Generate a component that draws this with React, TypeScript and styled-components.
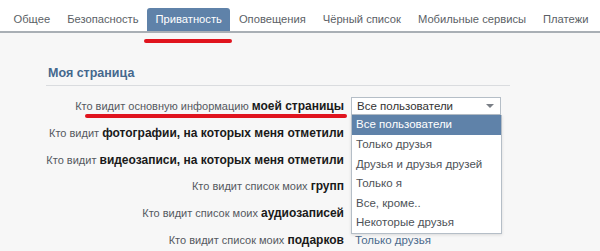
import { Fragment } from "react";
import styled, { createGlobalStyle } from "styled-components";

const GlobalStyle = createGlobalStyle`
  body {
    margin: 0;
    font-family: "Liberation Sans", Arial, sans-serif;
    font-size: 11px;
    background: #f7f7f7;
  }
`;

const Page = styled.div`
  position: relative;
  width: 600px;
  height: 251px;
  overflow: hidden;
  background: #f7f7f7;
`;

const TabBar = styled.nav`
  display: flex;
  align-items: flex-end;
  height: 31px;
  padding-left: 5px;
  background: #fff;
  border-bottom: 2px solid #a9afb5;
`;

const Tab = styled.div<{ $active?: boolean }>`
  height: 23px;
  line-height: 23px;
  padding: 0 8.5px;
  font-size: 11.2px;
  white-space: nowrap;
  color: ${(p) => (p.$active ? "#fff" : "#5b5f66")};
  background: ${(p) => (p.$active ? "#5f82a9" : "transparent")};
  border-radius: 3px 3px 0 0;
`;

// red marker drawn over the screenshot
const Mark = styled.div<{ $left: number; $top: number; $width: number }>`
  position: absolute;
  left: ${(p) => p.$left}px;
  top: ${(p) => p.$top}px;
  width: ${(p) => p.$width}px;
  height: 4px;
  border-radius: 2px;
  background: #e0141e;
`;

const Content = styled.div`
  padding: 0 90px 0 46px;
`;

const SectionTitle = styled.h2`
  margin: 33px 0 0;
  padding: 0 0 5px 2px;
  font-size: 12.5px;
  font-weight: bold;
  color: #45688e;
  border-bottom: 1px solid #dadcdf;
`;

const Rows = styled.div`
  display: grid;
  grid-template-columns: 298px 1fr;
  column-gap: 7px;
  grid-auto-rows: 26.7px;
  margin-top: 7px;
  align-items: center;
`;

const Label = styled.div`
  text-align: right;
  white-space: nowrap;
  color: #55595f;
  font-size: 11px;
  b {
    color: #1a1a1a;
    font-size: 12px;
  }
`;

const Value = styled.div`
  padding-left: 4px;
  color: #4a6a8c;
  font-size: 11.5px;
`;

const Select = styled.div`
  position: relative;
  width: 143px;
  height: 16px;
  line-height: 16px;
  padding-left: 5px;
  border: 1px solid #b5bec7;
  background: #fff;
  color: #333;
  font-size: 11.5px;
`;

const Arrow = styled.span`
  position: absolute;
  right: 6px;
  top: 6px;
  border-left: 4px solid transparent;
  border-right: 4px solid transparent;
  border-top: 4px solid #7a7f86;
`;

const Menu = styled.ul`
  position: absolute;
  left: -1px;
  top: 17px;
  z-index: 2;
  width: 149px;
  margin: 0;
  padding: 0;
  list-style: none;
  background: #fff;
  border: 1px solid #b5bec7;
  border-top: none;
  box-shadow: 0 1px 3px rgba(0, 0, 0, 0.12);
`;

const Option = styled.li<{ $selected?: boolean }>`
  height: 19.6px;
  line-height: 19.6px;
  padding-left: 4px;
  font-size: 11.5px;
  color: ${(p) => (p.$selected ? "#fff" : "#4d5258")};
  background: ${(p) => (p.$selected ? "#5f82a9" : "#fff")};
`;

const tabs = [
  "Общее",
  "Безопасность",
  "Приватность",
  "Оповещения",
  "Чёрный список",
  "Мобильные сервисы",
  "Платежи",
];

const options = [
  "Все пользователи",
  "Только друзья",
  "Друзья и друзья друзей",
  "Только я",
  "Все, кроме..",
  "Некоторые друзья",
];

// value is empty where the open menu covers it
const rows: { plain: string; bold: string; value: string }[] = [
  { plain: "Кто видит основную информацию ", bold: "моей страницы", value: "" },
  { plain: "Кто видит ", bold: "фотографии, на которых меня отметили", value: "" },
  { plain: "Кто видит ", bold: "видеозаписи, на которых меня отметили", value: "" },
  { plain: "Кто видит список моих ", bold: "групп", value: "" },
  { plain: "Кто видит список моих ", bold: "аудиозаписей", value: "" },
  { plain: "Кто видит список моих ", bold: "подарков", value: "Только друзья" },
];

export default function App() {
  return (
    <Page>
      <GlobalStyle />
      <TabBar>
        {tabs.map((t) => (
          <Tab key={t} $active={t === "Приватность"}>
            {t}
          </Tab>
        ))}
      </TabBar>
      <Content>
        <SectionTitle>Моя страница</SectionTitle>
        <Rows>
          {rows.map((r, i) => (
            <Fragment key={i}>
              <Label>
                {r.plain}
                <b>{r.bold}</b>
              </Label>
              {i === 0 ? (
                <Select>
                  Все пользователи
                  <Arrow />
                  <Menu>
                    {options.map((o, j) => (
                      <Option key={o} $selected={j === 0}>
                        {o}
                      </Option>
                    ))}
                  </Menu>
                </Select>
              ) : (
                <Value>{r.value}</Value>
              )}
            </Fragment>
          ))}
        </Rows>
      </Content>
      <Mark $left={144} $top={39} $width={88} />
      <Mark $left={85} $top={114} $width={262} />
    </Page>
  );
}
